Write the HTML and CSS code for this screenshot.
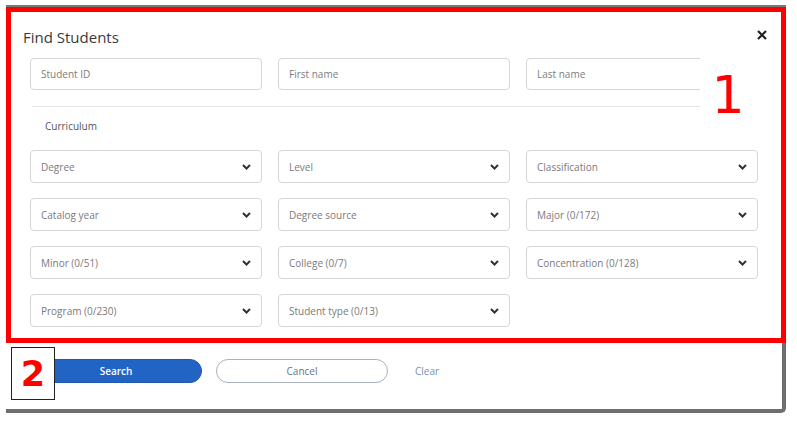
FILE: index.html
```html
<!DOCTYPE html>
<html lang="en">
<head>
    <meta charset="UTF-8">
    <title>Find Students</title>
    <link rel="stylesheet" href="styles.css">
</head>
<body>
    <div class="dialog">
        <!-- search form (annotated 1) -->
        <div class="dialog-body">
            <div class="head">
                <h2>Find Students</h2>
                <button class="close" aria-label="Close">
                    <svg width="10" height="10" viewBox="0 0 10 10"><path d="M1 1L9 9M9 1L1 9" stroke="#222" stroke-width="2.2" fill="none"/></svg>
                </button>
            </div>
            <div class="row">
                <input type="text" class="field" placeholder="Student ID">
                <input type="text" class="field" placeholder="First name">
                <input type="text" class="field" placeholder="Last name">
            </div>
            <div class="divider"></div>
            <div class="section-title">Curriculum</div>
            <div class="row selects">
                <div class="field pick"><span>Degree</span><svg class="chev" width="9" height="6" viewBox="0 0 9 6"><path d="M1 1L4.5 4.5L8 1" stroke="#333" stroke-width="2" fill="none"/></svg></div>
                <div class="field pick"><span>Level</span><svg class="chev" width="9" height="6" viewBox="0 0 9 6"><path d="M1 1L4.5 4.5L8 1" stroke="#333" stroke-width="2" fill="none"/></svg></div>
                <div class="field pick"><span>Classification</span><svg class="chev" width="9" height="6" viewBox="0 0 9 6"><path d="M1 1L4.5 4.5L8 1" stroke="#333" stroke-width="2" fill="none"/></svg></div>
                <div class="field pick"><span>Catalog year</span><svg class="chev" width="9" height="6" viewBox="0 0 9 6"><path d="M1 1L4.5 4.5L8 1" stroke="#333" stroke-width="2" fill="none"/></svg></div>
                <div class="field pick"><span>Degree source</span><svg class="chev" width="9" height="6" viewBox="0 0 9 6"><path d="M1 1L4.5 4.5L8 1" stroke="#333" stroke-width="2" fill="none"/></svg></div>
                <div class="field pick"><span>Major (0/172)</span><svg class="chev" width="9" height="6" viewBox="0 0 9 6"><path d="M1 1L4.5 4.5L8 1" stroke="#333" stroke-width="2" fill="none"/></svg></div>
                <div class="field pick"><span>Minor (0/51)</span><svg class="chev" width="9" height="6" viewBox="0 0 9 6"><path d="M1 1L4.5 4.5L8 1" stroke="#333" stroke-width="2" fill="none"/></svg></div>
                <div class="field pick"><span>College (0/7)</span><svg class="chev" width="9" height="6" viewBox="0 0 9 6"><path d="M1 1L4.5 4.5L8 1" stroke="#333" stroke-width="2" fill="none"/></svg></div>
                <div class="field pick"><span>Concentration (0/128)</span><svg class="chev" width="9" height="6" viewBox="0 0 9 6"><path d="M1 1L4.5 4.5L8 1" stroke="#333" stroke-width="2" fill="none"/></svg></div>
                <div class="field pick"><span>Program (0/230)</span><svg class="chev" width="9" height="6" viewBox="0 0 9 6"><path d="M1 1L4.5 4.5L8 1" stroke="#333" stroke-width="2" fill="none"/></svg></div>
                <div class="field pick"><span>Student type (0/13)</span><svg class="chev" width="9" height="6" viewBox="0 0 9 6"><path d="M1 1L4.5 4.5L8 1" stroke="#333" stroke-width="2" fill="none"/></svg></div>
            </div>
            <div class="note note-1">1</div>
        </div>
        <!-- actions (annotated 2) -->
        <div class="dialog-foot">
            <button class="btn btn-primary">Search</button>
            <button class="btn btn-outline">Cancel</button>
            <button class="btn-link">Clear</button>
            <div class="note note-2">2</div>
        </div>
    </div>
</body>
</html>
```

FILE: styles.css
```css
body {
    margin: 0;
    background: #fff;
    font-family: "Open Sans", "Liberation Sans", sans-serif;
}
.dialog {
    width: 780px;
    margin: 5px 0 0 6px;
    border-top: 2px solid #7a7a7a;
}
.dialog-body {
    position: relative;
    box-sizing: border-box;
    height: 336px;
    border: 5px solid #ff0000;
    padding: 15px 14px 0 12px;
}
.head {
    display: flex;
    justify-content: space-between;
    align-items: flex-start;
}
.head h2 {
    margin: 0;
    font-size: 15px;
    line-height: 20px;
    font-weight: 400;
    color: #3a3a3a;
}
.close {
    border: none;
    background: none;
    padding: 0;
    margin-top: 1px;
    width: 11px;
    height: 10px;
    cursor: pointer;
}
.row {
    display: grid;
    grid-template-columns: repeat(3, 232px);
    column-gap: 16px;
    row-gap: 15px;
    margin: 11px 0 0 7px;
}
.field {
    box-sizing: border-box;
    height: 32px;
    border: 1px solid #d6d6d6;
    border-radius: 4px;
    padding: 0 10px;
    font-family: inherit;
    font-size: 10px;
    color: #7a7a7a;
    background: #fff;
}
.field::placeholder {
    color: #7c7c7c;
}
.divider {
    height: 1px;
    background: #e4e4e4;
    margin: 16px 0 0 9px;
    width: 726px;
}
.section-title {
    font-size: 10px;
    line-height: 14px;
    color: #555;
    margin: 12px 0 0 22px;
}
.selects {
    margin-top: 17px;
}
.pick {
    height: 33px;
    display: flex;
    align-items: center;
    justify-content: space-between;
    cursor: pointer;
}
.chev {
    display: block;
}
.dialog-foot {
    position: relative;
    box-sizing: border-box;
    height: 70px;
    display: flex;
    align-items: flex-start;
    gap: 14px;
    padding: 16px 0 0 24px;
    border-right: 4px solid #6e6e6e;
    border-bottom: 4px solid #6e6e6e;
    border-bottom-right-radius: 5px;
}
.btn {
    box-sizing: border-box;
    width: 172px;
    height: 24px;
    border-radius: 12px;
    font-family: inherit;
    font-size: 10px;
    cursor: pointer;
}
.btn-primary {
    background: #2264c4;
    border: 1px solid #1d58ad;
    color: #fff;
    font-weight: 600;
}
.btn-outline {
    background: #fff;
    border: 1px solid #a9b2be;
    color: #66758c;
}
.btn-link {
    border: none;
    background: none;
    height: 24px;
    padding: 0 0 0 13px;
    font-family: inherit;
    font-size: 10px;
    color: #7890b2;
    cursor: pointer;
}
/* annotation labels on top of the screenshot */
.note {
    position: absolute;
    background: #fff;
    color: #ff0000;
    display: flex;
    align-items: center;
    justify-content: center;
}
.note-1 {
    left: 689px;
    top: 43px;
    width: 66px;
    height: 80px;
    box-sizing: border-box;
    padding-right: 10px;
    font-family: "DejaVu Sans", sans-serif;
    font-size: 52px;
    line-height: 1;
}
.note-2 {
    left: 5px;
    top: 4px;
    width: 42px;
    height: 51px;
    border: 1px solid #222;
    font-family: "DejaVu Sans", sans-serif;
    font-weight: 700;
    font-size: 35px;
}
```
